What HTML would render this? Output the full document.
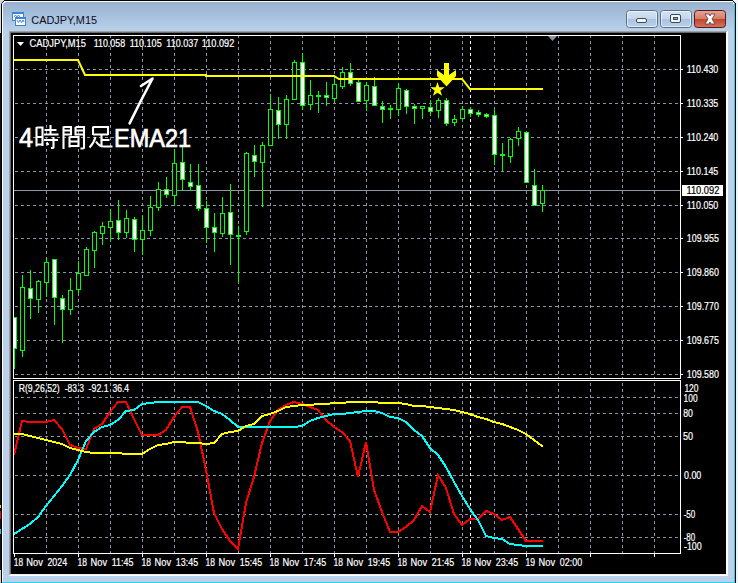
<!DOCTYPE html><html><head><meta charset="utf-8"><style>
html,body{margin:0;padding:0;background:#000;width:738px;height:583px;overflow:hidden}
svg{position:absolute;left:0;top:0;display:block}
text{font-family:"Liberation Sans",sans-serif}
</style></head><body>
<svg width="738" height="583" viewBox="0 0 738 583">
<defs><linearGradient id="tb" x1="0" y1="0" x2="0" y2="1"><stop offset="0" stop-color="#98b2d0"/><stop offset="1" stop-color="#b9d1ea"/></linearGradient><linearGradient id="btn" x1="0" y1="0" x2="0" y2="1"><stop offset="0" stop-color="#d6e4f3"/><stop offset="0.5" stop-color="#c3d6ec"/><stop offset="0.5" stop-color="#a9c2de"/><stop offset="1" stop-color="#bcd2ea"/></linearGradient><linearGradient id="cls" x1="0" y1="0" x2="0" y2="1"><stop offset="0" stop-color="#e8a496"/><stop offset="0.5" stop-color="#d47b69"/><stop offset="0.5" stop-color="#c2442c"/><stop offset="1" stop-color="#d2745e"/></linearGradient><clipPath id="mainclip"><rect x="14" y="36" width="666" height="342"/></clipPath><clipPath id="indclip"><rect x="14" y="381" width="666" height="172"/></clipPath></defs>
<g shape-rendering="crispEdges">
<rect x="0" y="0" width="738" height="583" fill="#101010"/>
<rect x="0" y="0" width="1" height="33" fill="#d4dae2"/>
<rect x="0" y="505" width="1" height="3" fill="#e8e000"/><rect x="0" y="511" width="1" height="8" fill="#e81010"/><rect x="0" y="529" width="1" height="5" fill="#20d0e0"/><rect x="0" y="570" width="1" height="13" fill="#d0d0d0"/>
<rect x="736" y="0" width="2" height="583" fill="#f4f4f4"/>
<rect x="1" y="0" width="735" height="583" fill="#000"/>
<rect x="2" y="1" width="733" height="582" fill="#fff"/>
<rect x="3" y="2" width="731" height="581" fill="#b9d1ea"/>
<rect x="3" y="2" width="731" height="29" fill="url(#tb)"/>
<rect x="734" y="2" width="1" height="581" fill="#2ad0f0"/>
<rect x="2" y="582" width="733" height="1" fill="#2ad0f0"/>
<rect x="0" y="0" width="4" height="4" fill="#d4dae2"/><rect x="1" y="4" width="1" height="1" fill="#000"/><rect x="1" y="3" width="1" height="1" fill="#555"/><rect x="2" y="2" width="1" height="1" fill="#000"/><rect x="3" y="1" width="1" height="1" fill="#000"/><rect x="4" y="0" width="1" height="1" fill="#000"/><rect x="2" y="3" width="1" height="2" fill="#fff"/><rect x="3" y="2" width="2" height="1" fill="#fff"/><rect x="3" y="3" width="1" height="1" fill="#c8d8ea"/>
<rect x="733" y="0" width="5" height="4" fill="#f4f4f4"/><rect x="732" y="0" width="1" height="1" fill="#000"/><rect x="733" y="1" width="1" height="1" fill="#000"/><rect x="734" y="2" width="1" height="1" fill="#000"/><rect x="735" y="3" width="1" height="2" fill="#000"/><rect x="732" y="1" width="1" height="1" fill="#fff"/><rect x="733" y="2" width="1" height="1" fill="#8ee0f4"/><rect x="734" y="3" width="1" height="2" fill="#2ad0f0"/>
<rect x="9" y="31" width="719" height="545" fill="#fff"/>
<rect x="9" y="31" width="718" height="1" fill="#a0a0a0"/>
<rect x="9" y="31" width="1" height="544" fill="#a0a0a0"/>
<rect x="10" y="32" width="716" height="543" fill="#f0f0f0"/>
<rect x="10" y="32" width="716" height="1" fill="#696969"/>
<rect x="10" y="32" width="1" height="542" fill="#696969"/>
<rect x="11" y="33" width="715" height="541" fill="#000"/>
</g>
<g shape-rendering="crispEdges"><rect x="12" y="12" width="12" height="9" fill="#3c84f2"/><rect x="13" y="14" width="10" height="6" fill="#fff"/><rect x="13" y="12" width="1" height="1" fill="#3f8a66"/><rect x="13" y="20" width="1" height="1" fill="#3f8a66"/><rect x="16" y="12" width="1" height="1" fill="#3f8a66"/><rect x="16" y="20" width="1" height="1" fill="#3f8a66"/><rect x="19" y="12" width="1" height="1" fill="#3f8a66"/><rect x="19" y="20" width="1" height="1" fill="#3f8a66"/><rect x="22" y="12" width="1" height="1" fill="#3f8a66"/><rect x="22" y="20" width="1" height="1" fill="#3f8a66"/><rect x="12" y="14" width="1" height="1" fill="#3f8a66"/><rect x="23" y="14" width="1" height="1" fill="#3f8a66"/><rect x="12" y="17" width="1" height="1" fill="#3f8a66"/><rect x="23" y="17" width="1" height="1" fill="#3f8a66"/><rect x="15" y="17" width="11" height="9" fill="#3c84f2"/><rect x="16" y="19" width="9" height="6" fill="#fff"/><rect x="16" y="17" width="1" height="1" fill="#3f8a66"/><rect x="16" y="25" width="1" height="1" fill="#3f8a66"/><rect x="19" y="17" width="1" height="1" fill="#3f8a66"/><rect x="19" y="25" width="1" height="1" fill="#3f8a66"/><rect x="22" y="17" width="1" height="1" fill="#3f8a66"/><rect x="22" y="25" width="1" height="1" fill="#3f8a66"/><rect x="25" y="17" width="1" height="1" fill="#3f8a66"/><rect x="25" y="25" width="1" height="1" fill="#3f8a66"/><rect x="15" y="19" width="1" height="1" fill="#3f8a66"/><rect x="25" y="19" width="1" height="1" fill="#3f8a66"/><rect x="15" y="22" width="1" height="1" fill="#3f8a66"/><rect x="25" y="22" width="1" height="1" fill="#3f8a66"/></g>
<polyline points="14,17 15.5,15 17,17 18.5,15 20,17" fill="none" stroke="#3a78e0" stroke-width="0.9"/>
<polyline points="17,20 18.5,22.5 20,20 21.5,22.5 23,20 24,22" fill="none" stroke="#3a70d8" stroke-width="0.9"/>
<rect x="626.5" y="10.5" width="31" height="17" rx="3" ry="3" fill="url(#btn)" stroke="#5b6f8a" stroke-width="1"/><rect x="627.5" y="11.5" width="29" height="15" rx="2" ry="2" fill="none" stroke="rgba(255,255,255,0.55)" stroke-width="1"/>
<rect x="636.5" y="18.5" width="10" height="4" rx="1.5" fill="#f4f4f0" stroke="#3c4a5e" stroke-width="1"/>
<rect x="660.5" y="10.5" width="31" height="17" rx="3" ry="3" fill="url(#btn)" stroke="#5b6f8a" stroke-width="1"/><rect x="661.5" y="11.5" width="29" height="15" rx="2" ry="2" fill="none" stroke="rgba(255,255,255,0.55)" stroke-width="1"/>
<rect x="670.5" y="14.5" width="10" height="8" rx="1.5" fill="#f4f4f0" stroke="#3c4a5e" stroke-width="1"/><rect x="673.5" y="17.5" width="4" height="2" fill="#8aa4c8" stroke="#3c4a5e" stroke-width="1"/>
<rect x="694.5" y="10.5" width="31" height="17" rx="3" ry="3" fill="url(#cls)" stroke="#5a1a18" stroke-width="1"/>
<path d="M705,14 L709,14 L710,16 L711,14 L715,14 L712,19 L715,24 L711,24 L710,22 L709,24 L705,24 L708,19 Z" fill="#fff" stroke="#5a3a3a" stroke-width="0.8"/>
<g shape-rendering="crispEdges" fill="none" stroke="#fff" stroke-width="1">
<rect x="13.5" y="35.5" width="667" height="343"/>
<rect x="13.5" y="380.5" width="667" height="173"/>
</g>
<g shape-rendering="crispEdges" stroke="#8796a6" stroke-width="1" stroke-dasharray="3 3">
<line x1="15" y1="69.5" x2="680" y2="69.5"/>
<line x1="15" y1="103.5" x2="680" y2="103.5"/>
<line x1="15" y1="137.5" x2="680" y2="137.5"/>
<line x1="15" y1="171.5" x2="680" y2="171.5"/>
<line x1="15" y1="205.5" x2="680" y2="205.5"/>
<line x1="15" y1="238.5" x2="680" y2="238.5"/>
<line x1="15" y1="272.5" x2="680" y2="272.5"/>
<line x1="15" y1="306.5" x2="680" y2="306.5"/>
<line x1="15" y1="340.5" x2="680" y2="340.5"/>
<line x1="15" y1="374.5" x2="680" y2="374.5"/>
<line x1="15" y1="397.5" x2="680" y2="397.5"/>
<line x1="15" y1="413.5" x2="680" y2="413.5"/>
<line x1="15" y1="436.5" x2="680" y2="436.5"/>
<line x1="15" y1="475.5" x2="680" y2="475.5"/>
<line x1="15" y1="514.5" x2="680" y2="514.5"/>
<line x1="15" y1="537.5" x2="680" y2="537.5"/>
<line x1="46.5" y1="36" x2="46.5" y2="378" stroke-dashoffset="1"/>
<line x1="46.5" y1="381" x2="46.5" y2="553" stroke-dashoffset="4"/>
<line x1="78.5" y1="36" x2="78.5" y2="378" stroke-dashoffset="1"/>
<line x1="78.5" y1="381" x2="78.5" y2="553" stroke-dashoffset="4"/>
<line x1="110.5" y1="36" x2="110.5" y2="378" stroke-dashoffset="1"/>
<line x1="110.5" y1="381" x2="110.5" y2="553" stroke-dashoffset="4"/>
<line x1="142.5" y1="36" x2="142.5" y2="378" stroke-dashoffset="1"/>
<line x1="142.5" y1="381" x2="142.5" y2="553" stroke-dashoffset="4"/>
<line x1="174.5" y1="36" x2="174.5" y2="378" stroke-dashoffset="1"/>
<line x1="174.5" y1="381" x2="174.5" y2="553" stroke-dashoffset="4"/>
<line x1="206.5" y1="36" x2="206.5" y2="378" stroke-dashoffset="1"/>
<line x1="206.5" y1="381" x2="206.5" y2="553" stroke-dashoffset="4"/>
<line x1="238.5" y1="36" x2="238.5" y2="378" stroke-dashoffset="1"/>
<line x1="238.5" y1="381" x2="238.5" y2="553" stroke-dashoffset="4"/>
<line x1="270.5" y1="36" x2="270.5" y2="378" stroke-dashoffset="1"/>
<line x1="270.5" y1="381" x2="270.5" y2="553" stroke-dashoffset="4"/>
<line x1="302.5" y1="36" x2="302.5" y2="378" stroke-dashoffset="1"/>
<line x1="302.5" y1="381" x2="302.5" y2="553" stroke-dashoffset="4"/>
<line x1="334.5" y1="36" x2="334.5" y2="378" stroke-dashoffset="1"/>
<line x1="334.5" y1="381" x2="334.5" y2="553" stroke-dashoffset="4"/>
<line x1="366.5" y1="36" x2="366.5" y2="378" stroke-dashoffset="1"/>
<line x1="366.5" y1="381" x2="366.5" y2="553" stroke-dashoffset="4"/>
<line x1="398.5" y1="36" x2="398.5" y2="378" stroke-dashoffset="1"/>
<line x1="398.5" y1="381" x2="398.5" y2="553" stroke-dashoffset="4"/>
<line x1="430.5" y1="36" x2="430.5" y2="378" stroke-dashoffset="1"/>
<line x1="430.5" y1="381" x2="430.5" y2="553" stroke-dashoffset="4"/>
<line x1="462.5" y1="36" x2="462.5" y2="378" stroke-dashoffset="1"/>
<line x1="462.5" y1="381" x2="462.5" y2="553" stroke-dashoffset="4"/>
<line x1="494.5" y1="36" x2="494.5" y2="378" stroke-dashoffset="1"/>
<line x1="494.5" y1="381" x2="494.5" y2="553" stroke-dashoffset="4"/>
<line x1="526.5" y1="36" x2="526.5" y2="378" stroke-dashoffset="1"/>
<line x1="526.5" y1="381" x2="526.5" y2="553" stroke-dashoffset="4"/>
<line x1="558.5" y1="36" x2="558.5" y2="378" stroke-dashoffset="1"/>
<line x1="558.5" y1="381" x2="558.5" y2="553" stroke-dashoffset="4"/>
<line x1="590.5" y1="36" x2="590.5" y2="378" stroke-dashoffset="1"/>
<line x1="590.5" y1="381" x2="590.5" y2="553" stroke-dashoffset="4"/>
<line x1="622.5" y1="36" x2="622.5" y2="378" stroke-dashoffset="1"/>
<line x1="622.5" y1="381" x2="622.5" y2="553" stroke-dashoffset="4"/>
<line x1="654.5" y1="36" x2="654.5" y2="378" stroke-dashoffset="1"/>
<line x1="654.5" y1="381" x2="654.5" y2="553" stroke-dashoffset="4"/>
</g>
<g shape-rendering="crispEdges" stroke="#fff" stroke-width="1" stroke-dasharray="3 3">
<line x1="470.5" y1="36" x2="470.5" y2="378" stroke-dashoffset="1"/>
<line x1="470.5" y1="381" x2="470.5" y2="553" stroke-dashoffset="4"/>
</g>
<polygon points="548,36 557,36 552.5,41" fill="#8796a6"/>
<rect x="14" y="190" width="666" height="1" fill="#8a98a8" shape-rendering="crispEdges"/>
<g shape-rendering="crispEdges" clip-path="url(#mainclip)">
<rect x="14" y="317" width="1" height="52" fill="#00ff00"/>
<rect x="12" y="317" width="5" height="32" fill="#00ff00"/>
<rect x="13" y="318" width="3" height="30" fill="#fff"/>
<rect x="22" y="275" width="1" height="82" fill="#00ff00"/>
<rect x="20" y="287" width="5" height="64" fill="#00ff00"/>
<rect x="21" y="288" width="3" height="62" fill="#000"/>
<rect x="30" y="270" width="1" height="49" fill="#00ff00"/>
<rect x="28" y="288" width="5" height="11" fill="#00ff00"/>
<rect x="29" y="289" width="3" height="9" fill="#fff"/>
<rect x="38" y="280" width="1" height="33" fill="#00ff00"/>
<rect x="36" y="281" width="5" height="19" fill="#00ff00"/>
<rect x="37" y="282" width="3" height="17" fill="#000"/>
<rect x="46" y="258" width="1" height="39" fill="#00ff00"/>
<rect x="44" y="262" width="5" height="21" fill="#00ff00"/>
<rect x="45" y="263" width="3" height="19" fill="#000"/>
<rect x="54" y="259" width="1" height="66" fill="#00ff00"/>
<rect x="52" y="259" width="5" height="39" fill="#00ff00"/>
<rect x="53" y="260" width="3" height="37" fill="#fff"/>
<rect x="62" y="295" width="1" height="48" fill="#00ff00"/>
<rect x="60" y="298" width="5" height="12" fill="#00ff00"/>
<rect x="61" y="299" width="3" height="10" fill="#fff"/>
<rect x="70" y="278" width="1" height="37" fill="#00ff00"/>
<rect x="68" y="290" width="5" height="20" fill="#00ff00"/>
<rect x="69" y="291" width="3" height="18" fill="#000"/>
<rect x="78" y="261" width="1" height="32" fill="#00ff00"/>
<rect x="76" y="273" width="5" height="17" fill="#00ff00"/>
<rect x="77" y="274" width="3" height="15" fill="#000"/>
<rect x="86" y="247" width="1" height="29" fill="#00ff00"/>
<rect x="84" y="249" width="5" height="27" fill="#00ff00"/>
<rect x="85" y="250" width="3" height="25" fill="#000"/>
<rect x="94" y="231" width="1" height="37" fill="#00ff00"/>
<rect x="92" y="232" width="5" height="19" fill="#00ff00"/>
<rect x="93" y="233" width="3" height="17" fill="#000"/>
<rect x="102" y="222" width="1" height="23" fill="#00ff00"/>
<rect x="100" y="226" width="5" height="8" fill="#00ff00"/>
<rect x="101" y="227" width="3" height="6" fill="#000"/>
<rect x="110" y="209" width="1" height="32" fill="#00ff00"/>
<rect x="108" y="221" width="5" height="7" fill="#00ff00"/>
<rect x="109" y="222" width="3" height="5" fill="#000"/>
<rect x="118" y="200" width="1" height="40" fill="#00ff00"/>
<rect x="116" y="220" width="5" height="13" fill="#00ff00"/>
<rect x="117" y="221" width="3" height="11" fill="#fff"/>
<rect x="126" y="210" width="1" height="28" fill="#00ff00"/>
<rect x="124" y="218" width="5" height="15" fill="#00ff00"/>
<rect x="125" y="219" width="3" height="13" fill="#000"/>
<rect x="134" y="217" width="1" height="35" fill="#00ff00"/>
<rect x="132" y="219" width="5" height="21" fill="#00ff00"/>
<rect x="133" y="220" width="3" height="19" fill="#fff"/>
<rect x="142" y="215" width="1" height="40" fill="#00ff00"/>
<rect x="140" y="230" width="5" height="10" fill="#00ff00"/>
<rect x="141" y="231" width="3" height="8" fill="#000"/>
<rect x="150" y="196" width="1" height="40" fill="#00ff00"/>
<rect x="148" y="207" width="5" height="24" fill="#00ff00"/>
<rect x="149" y="208" width="3" height="22" fill="#000"/>
<rect x="158" y="182" width="1" height="29" fill="#00ff00"/>
<rect x="156" y="189" width="5" height="19" fill="#00ff00"/>
<rect x="157" y="190" width="3" height="17" fill="#000"/>
<rect x="166" y="177" width="1" height="21" fill="#00ff00"/>
<rect x="164" y="189" width="5" height="6" fill="#00ff00"/>
<rect x="165" y="190" width="3" height="4" fill="#fff"/>
<rect x="174" y="149" width="1" height="57" fill="#00ff00"/>
<rect x="172" y="163" width="5" height="33" fill="#00ff00"/>
<rect x="173" y="164" width="3" height="31" fill="#000"/>
<rect x="182" y="146" width="1" height="45" fill="#00ff00"/>
<rect x="180" y="162" width="5" height="18" fill="#00ff00"/>
<rect x="181" y="163" width="3" height="16" fill="#fff"/>
<rect x="190" y="164" width="1" height="27" fill="#00ff00"/>
<rect x="188" y="182" width="5" height="5" fill="#00ff00"/>
<rect x="189" y="183" width="3" height="3" fill="#fff"/>
<rect x="198" y="164" width="1" height="47" fill="#00ff00"/>
<rect x="196" y="185" width="5" height="24" fill="#00ff00"/>
<rect x="197" y="186" width="3" height="22" fill="#fff"/>
<rect x="206" y="201" width="1" height="42" fill="#00ff00"/>
<rect x="204" y="208" width="5" height="20" fill="#00ff00"/>
<rect x="205" y="209" width="3" height="18" fill="#fff"/>
<rect x="214" y="213" width="1" height="39" fill="#00ff00"/>
<rect x="212" y="227" width="5" height="6" fill="#00ff00"/>
<rect x="213" y="228" width="3" height="4" fill="#fff"/>
<rect x="222" y="197" width="1" height="40" fill="#00ff00"/>
<rect x="220" y="213" width="5" height="21" fill="#00ff00"/>
<rect x="221" y="214" width="3" height="19" fill="#000"/>
<rect x="230" y="184" width="1" height="81" fill="#00ff00"/>
<rect x="228" y="212" width="5" height="23" fill="#00ff00"/>
<rect x="229" y="213" width="3" height="21" fill="#fff"/>
<rect x="238" y="226" width="1" height="57" fill="#00ff00"/>
<rect x="236" y="235" width="5" height="2" fill="#00ff00"/>
<rect x="246" y="152" width="1" height="83" fill="#00ff00"/>
<rect x="244" y="153" width="5" height="79" fill="#00ff00"/>
<rect x="245" y="154" width="3" height="77" fill="#000"/>
<rect x="254" y="145" width="1" height="32" fill="#00ff00"/>
<rect x="252" y="155" width="5" height="7" fill="#00ff00"/>
<rect x="253" y="156" width="3" height="5" fill="#fff"/>
<rect x="262" y="142" width="1" height="65" fill="#00ff00"/>
<rect x="260" y="145" width="5" height="18" fill="#00ff00"/>
<rect x="261" y="146" width="3" height="16" fill="#000"/>
<rect x="270" y="94" width="1" height="52" fill="#00ff00"/>
<rect x="268" y="109" width="5" height="37" fill="#00ff00"/>
<rect x="269" y="110" width="3" height="35" fill="#000"/>
<rect x="278" y="97" width="1" height="42" fill="#00ff00"/>
<rect x="276" y="110" width="5" height="15" fill="#00ff00"/>
<rect x="277" y="111" width="3" height="13" fill="#fff"/>
<rect x="286" y="95" width="1" height="44" fill="#00ff00"/>
<rect x="284" y="99" width="5" height="26" fill="#00ff00"/>
<rect x="285" y="100" width="3" height="24" fill="#000"/>
<rect x="294" y="60" width="1" height="40" fill="#00ff00"/>
<rect x="292" y="62" width="5" height="38" fill="#00ff00"/>
<rect x="293" y="63" width="3" height="36" fill="#000"/>
<rect x="302" y="53" width="1" height="57" fill="#00ff00"/>
<rect x="300" y="62" width="5" height="44" fill="#00ff00"/>
<rect x="301" y="63" width="3" height="42" fill="#fff"/>
<rect x="310" y="80" width="1" height="30" fill="#00ff00"/>
<rect x="308" y="95" width="5" height="10" fill="#00ff00"/>
<rect x="309" y="96" width="3" height="8" fill="#000"/>
<rect x="318" y="91" width="1" height="22" fill="#00ff00"/>
<rect x="316" y="95" width="5" height="2" fill="#00ff00"/>
<rect x="326" y="82" width="1" height="24" fill="#00ff00"/>
<rect x="324" y="95" width="5" height="3" fill="#00ff00"/>
<rect x="325" y="96" width="3" height="1" fill="#fff"/>
<rect x="334" y="77" width="1" height="25" fill="#00ff00"/>
<rect x="332" y="84" width="5" height="15" fill="#00ff00"/>
<rect x="333" y="85" width="3" height="13" fill="#000"/>
<rect x="342" y="67" width="1" height="22" fill="#00ff00"/>
<rect x="340" y="72" width="5" height="15" fill="#00ff00"/>
<rect x="341" y="73" width="3" height="13" fill="#000"/>
<rect x="350" y="63" width="1" height="23" fill="#00ff00"/>
<rect x="348" y="72" width="5" height="12" fill="#00ff00"/>
<rect x="349" y="73" width="3" height="10" fill="#fff"/>
<rect x="358" y="80" width="1" height="22" fill="#00ff00"/>
<rect x="356" y="82" width="5" height="20" fill="#00ff00"/>
<rect x="357" y="83" width="3" height="18" fill="#fff"/>
<rect x="366" y="82" width="1" height="29" fill="#00ff00"/>
<rect x="364" y="85" width="5" height="16" fill="#00ff00"/>
<rect x="365" y="86" width="3" height="14" fill="#000"/>
<rect x="374" y="77" width="1" height="29" fill="#00ff00"/>
<rect x="372" y="86" width="5" height="20" fill="#00ff00"/>
<rect x="373" y="87" width="3" height="18" fill="#fff"/>
<rect x="382" y="101" width="1" height="22" fill="#00ff00"/>
<rect x="380" y="106" width="5" height="4" fill="#00ff00"/>
<rect x="381" y="107" width="3" height="2" fill="#fff"/>
<rect x="390" y="105" width="1" height="14" fill="#00ff00"/>
<rect x="388" y="108" width="5" height="2" fill="#00ff00"/>
<rect x="398" y="83" width="1" height="33" fill="#00ff00"/>
<rect x="396" y="88" width="5" height="22" fill="#00ff00"/>
<rect x="397" y="89" width="3" height="20" fill="#000"/>
<rect x="406" y="89" width="1" height="25" fill="#00ff00"/>
<rect x="404" y="90" width="5" height="17" fill="#00ff00"/>
<rect x="405" y="91" width="3" height="15" fill="#fff"/>
<rect x="414" y="104" width="1" height="20" fill="#00ff00"/>
<rect x="412" y="106" width="5" height="3" fill="#00ff00"/>
<rect x="413" y="107" width="3" height="1" fill="#fff"/>
<rect x="422" y="106" width="1" height="13" fill="#00ff00"/>
<rect x="420" y="106" width="5" height="3" fill="#00ff00"/>
<rect x="421" y="107" width="3" height="1" fill="#000"/>
<rect x="430" y="100" width="1" height="15" fill="#00ff00"/>
<rect x="428" y="107" width="5" height="5" fill="#00ff00"/>
<rect x="429" y="108" width="3" height="3" fill="#fff"/>
<rect x="438" y="98" width="1" height="20" fill="#00ff00"/>
<rect x="436" y="100" width="5" height="11" fill="#00ff00"/>
<rect x="437" y="101" width="3" height="9" fill="#000"/>
<rect x="446" y="98" width="1" height="28" fill="#00ff00"/>
<rect x="444" y="100" width="5" height="24" fill="#00ff00"/>
<rect x="445" y="101" width="3" height="22" fill="#fff"/>
<rect x="454" y="115" width="1" height="11" fill="#00ff00"/>
<rect x="452" y="119" width="5" height="4" fill="#00ff00"/>
<rect x="453" y="120" width="3" height="2" fill="#000"/>
<rect x="462" y="106" width="1" height="14" fill="#00ff00"/>
<rect x="460" y="109" width="5" height="10" fill="#00ff00"/>
<rect x="461" y="110" width="3" height="8" fill="#000"/>
<rect x="470" y="107" width="1" height="10" fill="#00ff00"/>
<rect x="468" y="109" width="5" height="5" fill="#00ff00"/>
<rect x="469" y="110" width="3" height="3" fill="#fff"/>
<rect x="478" y="110" width="1" height="7" fill="#00ff00"/>
<rect x="476" y="112" width="5" height="3" fill="#00ff00"/>
<rect x="477" y="113" width="3" height="1" fill="#fff"/>
<rect x="486" y="113" width="1" height="5" fill="#00ff00"/>
<rect x="484" y="114" width="5" height="3" fill="#00ff00"/>
<rect x="485" y="115" width="3" height="1" fill="#fff"/>
<rect x="494" y="110" width="1" height="55" fill="#00ff00"/>
<rect x="492" y="115" width="5" height="40" fill="#00ff00"/>
<rect x="493" y="116" width="3" height="38" fill="#fff"/>
<rect x="502" y="143" width="1" height="28" fill="#00ff00"/>
<rect x="500" y="154" width="5" height="2" fill="#00ff00"/>
<rect x="510" y="138" width="1" height="25" fill="#00ff00"/>
<rect x="508" y="139" width="5" height="18" fill="#00ff00"/>
<rect x="509" y="140" width="3" height="16" fill="#000"/>
<rect x="518" y="127" width="1" height="19" fill="#00ff00"/>
<rect x="516" y="131" width="5" height="8" fill="#00ff00"/>
<rect x="517" y="132" width="3" height="6" fill="#000"/>
<rect x="526" y="132" width="1" height="51" fill="#00ff00"/>
<rect x="524" y="132" width="5" height="51" fill="#00ff00"/>
<rect x="525" y="133" width="3" height="49" fill="#fff"/>
<rect x="534" y="169" width="1" height="37" fill="#00ff00"/>
<rect x="532" y="185" width="5" height="21" fill="#00ff00"/>
<rect x="533" y="186" width="3" height="19" fill="#fff"/>
<rect x="542" y="185" width="1" height="27" fill="#00ff00"/>
<rect x="540" y="190" width="5" height="14" fill="#00ff00"/>
<rect x="541" y="191" width="3" height="12" fill="#000"/>
</g>
<g clip-path="url(#mainclip)">
<polyline points="14,60 78,60 85,75 206,75 206,76 334,76 339,79 462,79 470,89 543,89" fill="none" stroke="#ffff00" stroke-width="2"/>
<polygon points="437.5,82 439.3,87.2 444.8,87.3 440.4,90.6 442,95.8 437.5,92.7 433,95.8 434.6,90.6 430.2,87.3 435.7,87.2" fill="#ffff00"/>
<polygon points="444,63 449,63 449,75 456,70 456,76 446.5,86.5 437,76 437,70 444,75" fill="#ffff00"/>
</g>
<path d="M129.6,123.4 Q141,100 152.5,78.5 L141,86" fill="none" stroke="#fff" stroke-width="2.6" stroke-linecap="round" stroke-linejoin="round"/>
<g clip-path="url(#indclip)">
<polyline points="14,455 22,421 30,422 38,422 46,422 54,420 62,429 70,445 78,448 86,449 94,429 102,424 110,412 118,402 126,402 134,419 142,435 150,435 158,435 166,430 174,417 182,407 190,407 198,432 206,470 214,513 222,529 230,541 238,549 246,503 254,477 262,443 270,421 278,410 286,405 294,402 302,404 310,407 318,410 326,420 334,427 342,432 350,441 358,477 366,442 374,490 382,512 390,532 398,532 406,527 414,520 422,506 430,512 438,475 446,488 454,514 462,525 470,519 478,519 486,511 494,514 502,520 510,517 518,529 526,541 534,541 542,541 543,541" fill="none" stroke="#ff0000" stroke-width="2" stroke-linejoin="miter" shape-rendering="crispEdges"/>
<polyline points="14,534 22,529 30,524 38,517 46,506 54,496 62,486 70,475 78,460 86,441 94,432 102,427 110,425 118,420 126,411 134,410 142,404 150,403 158,402 166,402 174,402 182,402 190,402 198,402 206,406 214,411 222,414 230,420 238,427 246,427 254,427 262,427 270,427 278,427 286,427 294,427 302,426 310,421 318,418 326,416 334,414 342,414 350,413 358,412 366,411 374,411 382,413 390,417 398,418 406,422 414,430 422,436 430,448 438,455 446,467 454,482 462,496 470,509 478,520 486,536 494,538 502,539 510,544 518,545 526,546 534,546 542,546 543,546" fill="none" stroke="#00ffff" stroke-width="2" stroke-linejoin="miter" shape-rendering="crispEdges"/>
<polyline points="14,434 22,434 30,436 38,438 46,440 54,442 62,444 70,448 78,450 86,452 94,453 102,453 110,453 118,453 126,454 134,454 142,454 150,449 158,445 166,444 174,442 182,442 190,443 198,443 206,444 214,443 222,434 230,432 238,431 246,426 254,424 262,416 270,414 278,411 286,407 294,406 302,405 310,405 318,404 326,404 334,403 342,403 350,402 358,402 366,402 374,402 382,403 390,403 398,403 406,404 414,406 422,406 430,407 438,408 446,409 454,410 462,412 470,414 478,417 486,419 494,422 502,424 510,427 518,430 526,434 534,440 542,446 543,446" fill="none" stroke="#ffff00" stroke-width="2" stroke-linejoin="miter" shape-rendering="crispEdges"/>
</g>
<polygon points="17,42 24,42 20.5,46" fill="#fff"/>
<g shape-rendering="crispEdges">
<rect x="681" y="69" width="2" height="1" fill="#fff"/>
<rect x="681" y="103" width="2" height="1" fill="#fff"/>
<rect x="681" y="137" width="2" height="1" fill="#fff"/>
<rect x="681" y="171" width="2" height="1" fill="#fff"/>
<rect x="681" y="205" width="2" height="1" fill="#fff"/>
<rect x="681" y="238" width="2" height="1" fill="#fff"/>
<rect x="681" y="272" width="2" height="1" fill="#fff"/>
<rect x="681" y="306" width="2" height="1" fill="#fff"/>
<rect x="681" y="340" width="2" height="1" fill="#fff"/>
<rect x="681" y="374" width="2" height="1" fill="#fff"/>
</g>
<rect x="682" y="185" width="41" height="11" fill="#fff" shape-rendering="crispEdges"/>
<text x="29.6" y="47" font-size="10" fill="#fff" stroke="#fff" stroke-width="0.2" textLength="56.35" lengthAdjust="spacingAndGlyphs">CADJPY,M15</text>
<text x="93.7" y="47" font-size="10" fill="#fff" stroke="#fff" stroke-width="0.2" textLength="31.37" lengthAdjust="spacingAndGlyphs">110.058</text>
<text x="129.7" y="47" font-size="10" fill="#fff" stroke="#fff" stroke-width="0.2" textLength="31.96" lengthAdjust="spacingAndGlyphs">110.105</text>
<text x="166.3" y="47" font-size="10" fill="#fff" stroke="#fff" stroke-width="0.2" textLength="31.87" lengthAdjust="spacingAndGlyphs">110.037</text>
<text x="201.8" y="47" font-size="10" fill="#fff" stroke="#fff" stroke-width="0.2" textLength="32.47" lengthAdjust="spacingAndGlyphs">110.092</text>
<text x="18.7" y="392" font-size="10" fill="#fff" stroke="#fff" stroke-width="0.2" textLength="41.02" lengthAdjust="spacingAndGlyphs">R(9,26,52)</text>
<text x="64.8" y="392" font-size="10" fill="#fff" stroke="#fff" stroke-width="0.2" textLength="19.23" lengthAdjust="spacingAndGlyphs">-83.3</text>
<text x="88.6" y="392" font-size="10" fill="#fff" stroke="#fff" stroke-width="0.2" textLength="20.02" lengthAdjust="spacingAndGlyphs">-92.1</text>
<text x="112.4" y="392" font-size="10" fill="#fff" stroke="#fff" stroke-width="0.2" textLength="16.74" lengthAdjust="spacingAndGlyphs">36.4</text>
<text x="684.4" y="392" font-size="10" fill="#fff" stroke="#fff" stroke-width="0.2" textLength="14.14" lengthAdjust="spacingAndGlyphs">120</text>
<text x="683.6" y="402" font-size="10" fill="#fff" stroke="#fff" stroke-width="0.2" textLength="14.04" lengthAdjust="spacingAndGlyphs">100</text>
<text x="683.2" y="417" font-size="10" fill="#fff" stroke="#fff" stroke-width="0.2" textLength="9.71" lengthAdjust="spacingAndGlyphs">80</text>
<text x="683.0" y="440" font-size="10" fill="#fff" stroke="#fff" stroke-width="0.2" textLength="10.11" lengthAdjust="spacingAndGlyphs">50</text>
<text x="684.0" y="479" font-size="10" fill="#fff" stroke="#fff" stroke-width="0.2" textLength="17.23" lengthAdjust="spacingAndGlyphs">0.00</text>
<text x="683.7" y="518" font-size="10" fill="#fff" stroke="#fff" stroke-width="0.2" textLength="11.56" lengthAdjust="spacingAndGlyphs">-50</text>
<text x="683.7" y="541" font-size="10" fill="#fff" stroke="#fff" stroke-width="0.2" textLength="11.56" lengthAdjust="spacingAndGlyphs">-80</text>
<text x="684.0" y="550" font-size="10" fill="#fff" stroke="#fff" stroke-width="0.2" textLength="17.71" lengthAdjust="spacingAndGlyphs">-100</text>
<text x="686.8" y="73" font-size="10" fill="#fff" stroke="#fff" stroke-width="0.2" textLength="31.47" lengthAdjust="spacingAndGlyphs">110.430</text>
<text x="686.8" y="107" font-size="10" fill="#fff" stroke="#fff" stroke-width="0.2" textLength="31.47" lengthAdjust="spacingAndGlyphs">110.335</text>
<text x="686.8" y="141" font-size="10" fill="#fff" stroke="#fff" stroke-width="0.2" textLength="31.47" lengthAdjust="spacingAndGlyphs">110.240</text>
<text x="686.8" y="175" font-size="10" fill="#fff" stroke="#fff" stroke-width="0.2" textLength="31.47" lengthAdjust="spacingAndGlyphs">110.145</text>
<text x="686.8" y="209" font-size="10" fill="#fff" stroke="#fff" stroke-width="0.2" textLength="31.47" lengthAdjust="spacingAndGlyphs">110.050</text>
<text x="686.8" y="242" font-size="10" fill="#fff" stroke="#fff" stroke-width="0.2" textLength="32.14" lengthAdjust="spacingAndGlyphs">109.955</text>
<text x="686.8" y="276" font-size="10" fill="#fff" stroke="#fff" stroke-width="0.2" textLength="32.14" lengthAdjust="spacingAndGlyphs">109.860</text>
<text x="686.8" y="310" font-size="10" fill="#fff" stroke="#fff" stroke-width="0.2" textLength="32.14" lengthAdjust="spacingAndGlyphs">109.770</text>
<text x="686.8" y="344" font-size="10" fill="#fff" stroke="#fff" stroke-width="0.2" textLength="32.14" lengthAdjust="spacingAndGlyphs">109.675</text>
<text x="686.8" y="378" font-size="10" fill="#fff" stroke="#fff" stroke-width="0.2" textLength="32.14" lengthAdjust="spacingAndGlyphs">109.580</text>
<text x="13.8" y="566" font-size="10" fill="#fff" stroke="#fff" stroke-width="0.2" textLength="9.3" lengthAdjust="spacingAndGlyphs">18</text>
<text x="26.3" y="566" font-size="10" fill="#fff" stroke="#fff" stroke-width="0.2" textLength="16.61" lengthAdjust="spacingAndGlyphs">Nov</text>
<text x="47.4" y="566" font-size="10" fill="#fff" stroke="#fff" stroke-width="0.2" textLength="19.72" lengthAdjust="spacingAndGlyphs">2024</text>
<text x="77.6" y="566" font-size="10" fill="#fff" stroke="#fff" stroke-width="0.2" textLength="9.51" lengthAdjust="spacingAndGlyphs">18</text>
<text x="90.6" y="566" font-size="10" fill="#fff" stroke="#fff" stroke-width="0.2" textLength="16.51" lengthAdjust="spacingAndGlyphs">Nov</text>
<text x="111.8" y="566" font-size="10" fill="#fff" stroke="#fff" stroke-width="0.2" textLength="21.67" lengthAdjust="spacingAndGlyphs">11:45</text>
<text x="141.6" y="566" font-size="10" fill="#fff" stroke="#fff" stroke-width="0.2" textLength="9.51" lengthAdjust="spacingAndGlyphs">18</text>
<text x="154.6" y="566" font-size="10" fill="#fff" stroke="#fff" stroke-width="0.2" textLength="16.51" lengthAdjust="spacingAndGlyphs">Nov</text>
<text x="175.8" y="566" font-size="10" fill="#fff" stroke="#fff" stroke-width="0.2" textLength="22.33" lengthAdjust="spacingAndGlyphs">13:45</text>
<text x="205.6" y="566" font-size="10" fill="#fff" stroke="#fff" stroke-width="0.2" textLength="9.51" lengthAdjust="spacingAndGlyphs">18</text>
<text x="218.6" y="566" font-size="10" fill="#fff" stroke="#fff" stroke-width="0.2" textLength="16.51" lengthAdjust="spacingAndGlyphs">Nov</text>
<text x="239.8" y="566" font-size="10" fill="#fff" stroke="#fff" stroke-width="0.2" textLength="22.33" lengthAdjust="spacingAndGlyphs">15:45</text>
<text x="269.6" y="566" font-size="10" fill="#fff" stroke="#fff" stroke-width="0.2" textLength="9.51" lengthAdjust="spacingAndGlyphs">18</text>
<text x="282.6" y="566" font-size="10" fill="#fff" stroke="#fff" stroke-width="0.2" textLength="16.51" lengthAdjust="spacingAndGlyphs">Nov</text>
<text x="303.8" y="566" font-size="10" fill="#fff" stroke="#fff" stroke-width="0.2" textLength="22.33" lengthAdjust="spacingAndGlyphs">17:45</text>
<text x="333.6" y="566" font-size="10" fill="#fff" stroke="#fff" stroke-width="0.2" textLength="9.51" lengthAdjust="spacingAndGlyphs">18</text>
<text x="346.6" y="566" font-size="10" fill="#fff" stroke="#fff" stroke-width="0.2" textLength="16.51" lengthAdjust="spacingAndGlyphs">Nov</text>
<text x="367.8" y="566" font-size="10" fill="#fff" stroke="#fff" stroke-width="0.2" textLength="22.33" lengthAdjust="spacingAndGlyphs">19:45</text>
<text x="397.6" y="566" font-size="10" fill="#fff" stroke="#fff" stroke-width="0.2" textLength="9.51" lengthAdjust="spacingAndGlyphs">18</text>
<text x="410.6" y="566" font-size="10" fill="#fff" stroke="#fff" stroke-width="0.2" textLength="16.51" lengthAdjust="spacingAndGlyphs">Nov</text>
<text x="431.8" y="566" font-size="10" fill="#fff" stroke="#fff" stroke-width="0.2" textLength="22.33" lengthAdjust="spacingAndGlyphs">21:45</text>
<text x="461.6" y="566" font-size="10" fill="#fff" stroke="#fff" stroke-width="0.2" textLength="9.51" lengthAdjust="spacingAndGlyphs">18</text>
<text x="474.6" y="566" font-size="10" fill="#fff" stroke="#fff" stroke-width="0.2" textLength="16.51" lengthAdjust="spacingAndGlyphs">Nov</text>
<text x="495.8" y="566" font-size="10" fill="#fff" stroke="#fff" stroke-width="0.2" textLength="22.33" lengthAdjust="spacingAndGlyphs">23:45</text>
<text x="525.6" y="566" font-size="10" fill="#fff" stroke="#fff" stroke-width="0.2" textLength="9.51" lengthAdjust="spacingAndGlyphs">19</text>
<text x="538.6" y="566" font-size="10" fill="#fff" stroke="#fff" stroke-width="0.2" textLength="16.51" lengthAdjust="spacingAndGlyphs">Nov</text>
<text x="559.8" y="566" font-size="10" fill="#fff" stroke="#fff" stroke-width="0.2" textLength="22.33" lengthAdjust="spacingAndGlyphs">02:00</text>
<text x="686.4" y="194" font-size="10" fill="#000" stroke="#000" stroke-width="0.2" textLength="32.98" lengthAdjust="spacingAndGlyphs">110.092</text>
<text x="31.3" y="24" font-size="11.3" fill="#0c0c24" stroke="#0c0c24" stroke-width="0" textLength="65.73" lengthAdjust="spacingAndGlyphs">CADJPY,M15</text>
<g shape-rendering="crispEdges">
<rect x="14" y="554" width="1" height="3" fill="#fff"/>
<rect x="78" y="554" width="1" height="3" fill="#fff"/>
<rect x="142" y="554" width="1" height="3" fill="#fff"/>
<rect x="206" y="554" width="1" height="3" fill="#fff"/>
<rect x="270" y="554" width="1" height="3" fill="#fff"/>
<rect x="334" y="554" width="1" height="3" fill="#fff"/>
<rect x="398" y="554" width="1" height="3" fill="#fff"/>
<rect x="462" y="554" width="1" height="3" fill="#fff"/>
<rect x="526" y="554" width="1" height="3" fill="#fff"/>
<rect x="590" y="554" width="1" height="3" fill="#fff"/>
<rect x="654" y="554" width="1" height="3" fill="#fff"/>
</g>
<text x="19" y="146.5" fill="#fff" font-size="27.5" stroke="#fff" stroke-width="0.7" textLength="14" lengthAdjust="spacingAndGlyphs">4</text>
<text x="114" y="146.7" fill="#fff" font-size="26.5" stroke="#fff" stroke-width="0.7" textLength="77" lengthAdjust="spacingAndGlyphs">EMA21</text>
<path d="M36.5,127 V146.5 M36.5,127.5 H42.5 V146 M36.5,137 H42.5 M36.5,144.5 H42.5 M50.5,125 V134.5 M44.5,130 H56.5 M44,134.5 H58.5 M44,140 H58 M53.5,137 V147.5 Q53.5,148 51,148 M46.5,142.5 L48.5,145 M63.5,126.5 V149 M63.5,127 H71 V134.5 H63.5 M63.5,130.5 H71 M75.5,127 H84 V148 Q84,148.5 80.5,148.5 M75.5,127 V134.5 H84 M75.5,130.5 H84 M69.5,136.5 V147.5 M69.5,137 H78.5 V147 M69.5,141.5 H78.5 M69.5,146 H78.5 M93,126.5 V135 M93,127 H108 V135 M93,134.5 H108 M101.5,135 V146.5 M101.5,140 H109.5 M95.5,137 Q94,143 89.5,147.5 M96,141.5 Q99,146.5 104,146.5 H112.5" fill="none" stroke="#fff" stroke-width="2.1"/>
</svg></body></html>
